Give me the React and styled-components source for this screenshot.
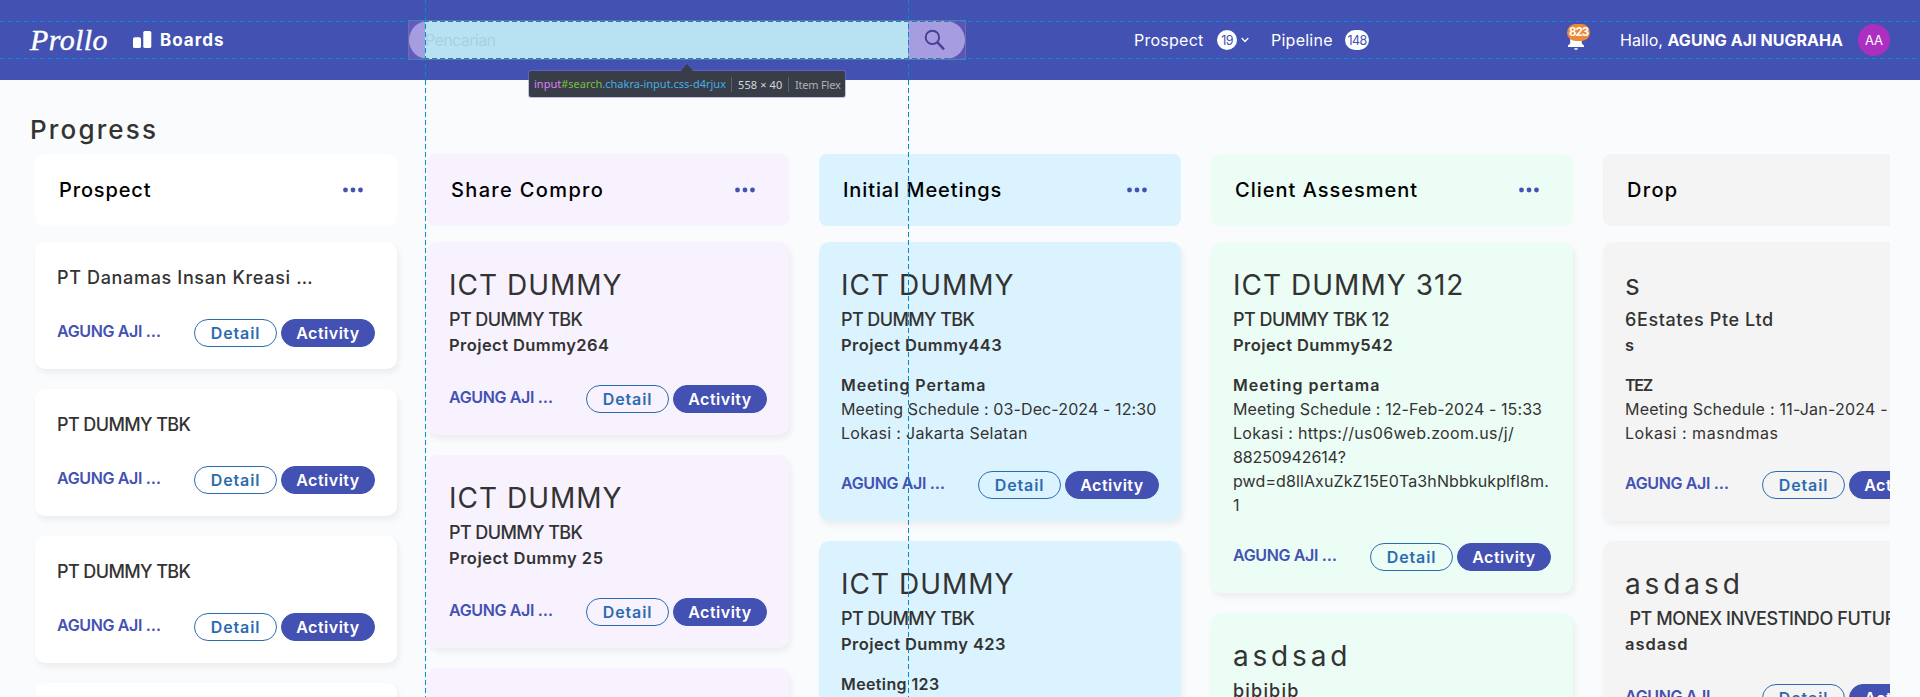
import React from "react";
import styled, { createGlobalStyle } from "styled-components";

const GlobalStyle = createGlobalStyle`
  * { box-sizing: border-box; }
  body {
    margin: 0;
    overflow: hidden;
    background: #fafbfd;
    color: #333;
    font-family: Inter, "Open Sans", sans-serif;
    white-space: nowrap;
    font-kerning: normal;
  }
`;

const INDIGO = "#4351b2";

const Page = styled.div`
  position: relative;
  height: 697px;
  overflow: hidden;
`;

/* ---------- top bar ---------- */

const TopBar = styled.header`
  display: flex;
  align-items: center;
  height: 80px;
  padding: 0 30px;
  background: ${INDIGO};
  color: #fff;
`;

const Logo = styled.div`
  width: 103px;
  font: italic 400 30px/34px "Liberation Serif", serif;
  letter-spacing: 0.4px;
  -webkit-text-stroke: 0.4px #fff;
`;

const BoardsLink = styled.div`
  display: flex;
  align-items: center;
  width: 275px;
`;

const BoardsLabel = styled.span`
  margin-left: 8px;
  font-size: 17px;
  font-weight: 700;
  letter-spacing: 1px;
`;

const Search = styled.div`
  display: flex;
  align-items: center;
  width: 558px;
  height: 40px;
  border: 1px solid #6f7196;
  background: linear-gradient(90deg, #6259c6, #5b52bf);
`;

const SearchPill = styled.div`
  display: flex;
  width: 100%;
  height: 38px;
  padding-left: 16px;
  border-radius: 19px;
  background: #a69ce0;
`;

const SearchField = styled.div`
  width: 483px;
  line-height: 38px;
  background: #b8e2f2;
  color: #a4d2e5;
  font-size: 16px;
  letter-spacing: -0.6px;
`;

const SearchButton = styled.div`
  display: flex;
  flex: 1;
  align-items: center;
  padding-left: 16px;
  color: #4a3f96;
`;

const NavLinks = styled.nav`
  display: flex;
  align-items: center;
  width: 432px;
  padding-left: 168px;
`;

const NavLabel = styled.span`
  width: ${(p) => p.$width}px;
  font-size: 16px;
  letter-spacing: 0.25px;
`;

const Count = styled.span`
  display: flex;
  justify-content: center;
  width: ${(p) => p.$width}px;
  height: 20px;
  border-radius: 10px;
  background: #fff;
  color: ${INDIGO};
  font-size: 12.5px;
  line-height: 21px;
  letter-spacing: -0.6px;
`;

const Chevron = styled.svg`
  margin: 0 22px 0 4px;
`;

const Bell = styled.div`
  position: relative;
  display: flex;
  width: 52px;
  margin-left: 169px;
`;

const BellCount = styled.span`
  position: absolute;
  left: 0;
  top: -5px;
  width: 23px;
  height: 17px;
  border-radius: 8.5px;
  background: #ed8936;
  font-size: 11.5px;
  font-weight: 700;
  line-height: 17px;
  letter-spacing: -1px;
  text-align: center;
`;

const Greeting = styled.div`
  width: 239px;
  padding-left: 1px;
  font-size: 16px;
  letter-spacing: 0.03px;
`;

const Avatar = styled.div`
  width: 32px;
  height: 32px;
  border-radius: 50%;
  background: #ad2fc2;
  font-size: 13px;
  line-height: 33px;
  text-align: center;
`;

/* ---------- board ---------- */

const Heading = styled.h1`
  margin: 30px 0 5px 30px;
  font-size: 26px;
  font-weight: 500;
  line-height: 39px;
  letter-spacing: 2.15px;
`;

const Board = styled.main`
  display: flex;
  gap: 30px;
  margin-right: 30px;
  padding-left: 35px;
  overflow: hidden;
`;

const Column = styled.section`
  display: flex;
  flex: 0 0 362px;
  flex-direction: column;
  gap: 20px;
  height: 543px;
`;

const ColumnHead = styled.div`
  display: flex;
  flex: none;
  align-items: center;
  justify-content: space-between;
  height: 72px;
  margin-bottom: -4px;
  padding: 0 34px 0 24px;
  border-radius: 8px;
  background: ${(p) => p.$tint};
  color: #000;
  font-size: 20px;
  font-weight: 500;
  letter-spacing: ${(p) => p.$track}px;
`;

const Card = styled.article`
  flex: none;
  padding: 22px;
  border-radius: 10px;
  background: ${(p) => p.$tint};
  box-shadow: 2px 4px 6px rgba(0, 0, 0, 0.06);
`;

const Title = styled.h2`
  margin: 0;
  font-size: 28px;
  font-weight: 400;
  line-height: 42px;
  letter-spacing: ${(p) => p.$track}px;
`;

const Company = styled.div`
  font-size: 18px;
  font-weight: 500;
  line-height: 27px;
  letter-spacing: ${(p) => p.$track}px;
  white-space: pre;
`;

const Project = styled.div`
  font-size: 16.5px;
  font-weight: 600;
  line-height: 24px;
  letter-spacing: ${(p) => p.$track}px;
`;

const Meeting = styled.div`
  margin: 16px 0 -2px;
`;

const MeetingName = styled.div`
  font-size: 16px;
  font-weight: 600;
  line-height: 24px;
  letter-spacing: ${(p) => p.$track}px;
`;

const MeetingLine = styled.div`
  font-size: 16px;
  line-height: 24px;
  letter-spacing: ${(p) => p.$track}px;
`;

const CardFoot = styled.div`
  display: flex;
  gap: 4px;
  margin-top: 28px;
`;

const Owner = styled.span`
  flex: 1;
  color: ${INDIGO};
  font-size: 16px;
  font-weight: 600;
  line-height: 24px;
  letter-spacing: -0.35px;
`;

const Button = styled.button`
  width: ${(p) => (p.$solid ? 94 : 83)}px;
  height: 28px;
  padding: 0;
  border: 1px solid ${(p) => (p.$solid ? INDIGO : "#2b6cb0")};
  border-radius: 14px;
  background: ${(p) => (p.$solid ? INDIGO : "transparent")};
  color: ${(p) => (p.$solid ? "#fff" : "#2b6cb0")};
  font: 600 16px/26px Inter, sans-serif;
  letter-spacing: ${(p) => (p.$solid ? 0.5 : 0.85)}px;
`;

/* ---------- element inspector overlay ---------- */

const GuideX = styled.div`
  position: absolute;
  left: 0;
  right: 0;
  top: ${(p) => p.$at}px;
  height: 1px;
  background: repeating-linear-gradient(90deg, #008ccf 0 5px, transparent 5px 8px);
`;

const GuideY = styled.div`
  position: absolute;
  top: 0;
  bottom: 0;
  left: ${(p) => p.$at}px;
  width: 1px;
  background: repeating-linear-gradient(180deg, #008ccf 0 5px, transparent 5px 8px);
`;

const Tooltip = styled.div`
  position: absolute;
  left: 529px;
  top: 71px;
  display: flex;
  align-items: center;
  width: 316px;
  height: 26px;
  padding-left: 5px;
  border-radius: 2px;
  background: #383d47;
  box-shadow: 0 0 0 1px rgba(120, 125, 200, 0.45);
  color: #d7d7db;
  font: 11px/26px "Noto Sans", sans-serif;
`;

const TooltipArrow = styled.i`
  position: absolute;
  left: 152px;
  top: -7px;
  border: solid transparent;
  border-width: 0 6px 7px;
  border-bottom-color: #383d47;
`;

const Selector = styled.span`
  width: 197px;
  color: #46aee6;
`;

const Tag = styled.span`
  color: #df80ff;
`;

const Id = styled.span`
  color: #76c043;
`;

const TooltipCell = styled.span`
  height: 15px;
  padding-left: 6px;
  width: 57px;
  border-left: 1px solid #5c616c;
  line-height: 15px;
  color: ${(p) => (p.$muted ? "#b1b1b3" : "#d7d7db")};
  letter-spacing: ${(p) => (p.$muted ? -0.2 : 0.1)}px;
`;

/* ---------- icons ---------- */

const BarsIcon = () => (
  <svg width="19" height="18" viewBox="0 0 19 18" fill="#fff">
    <rect x="0" y="6.3" width="8" height="10.7" rx="1.6" />
    <rect x="10.3" y="0" width="8" height="17" rx="1.6" />
  </svg>
);

const SearchIcon = () => (
  <svg width="22" height="22" viewBox="0 0 22 22" fill="none" stroke="currentColor" strokeWidth="2">
    <circle cx="8.4" cy="8.4" r="6.7" />
    <path d="M13.2 13.2 20 20.3" strokeWidth="2.4" />
  </svg>
);

const BellIcon = () => (
  <svg width="18" height="22" viewBox="0 0 18 22" fill="#fff">
    <path d="M9 1C5 1 3.2 4 3.2 7.500V14.500L1 16.500V18H17V16.500L14.800 14.500V7.500C14.800 4 13 1 9 1Z" />
    <path d="M7 19.300H11Q10.600 21 9 21T7 19.300Z" />
  </svg>
);

const DotsIcon = () => (
  <svg width="20" height="6" viewBox="0 0 20 6" fill={INDIGO}>
    <circle cx="2.5" cy="3" r="2.4" />
    <circle cx="10" cy="3" r="2.4" />
    <circle cx="17.500" cy="3" r="2.4" />
  </svg>
);

/* ---------- data: each text is [content, letter spacing] ---------- */

const DUMMY = ["ICT DUMMY", 1];
const DUMMY_PT = ["PT DUMMY TBK", -0.6];

const columns = [
  {
    name: ["Prospect", 0.85],
    tint: "#fff",
    cards: [
      { company: ["PT Danamas Insan Kreasi …", 0.66] },
      { company: DUMMY_PT },
      { company: DUMMY_PT },
      { company: DUMMY_PT },
    ],
  },
  {
    name: ["Share Compro", 1.35],
    tint: "#f7f2fe",
    cards: [
      { title: DUMMY, company: DUMMY_PT, project: ["Project Dummy264", 0.43] },
      { title: DUMMY, company: DUMMY_PT, project: ["Project Dummy 25", 0.5] },
      { title: DUMMY, company: DUMMY_PT, project: ["Project Dummy 25", 0.5] },
    ],
  },
  {
    name: ["Initial Meetings", 0.9],
    tint: "#dbf3ff",
    cards: [
      {
        title: DUMMY,
        company: DUMMY_PT,
        project: ["Project Dummy443", 0.43],
        meeting: ["Meeting Pertama", 0.87],
        lines: [
          ["Meeting Schedule : 03-Dec-2024 - 12:30", 0.11],
          ["Lokasi : Jakarta Selatan", 0.3],
        ],
      },
      {
        title: DUMMY,
        company: DUMMY_PT,
        project: ["Project Dummy 423", 0.43],
        meeting: ["Meeting 123", 0.38],
        lines: [],
      },
    ],
  },
  {
    name: ["Client Assesment", 1],
    tint: "#ebfdf5",
    cards: [
      {
        title: ["ICT DUMMY 312", 1.02],
        company: ["PT DUMMY TBK 12", -0.53],
        project: ["Project Dummy542", 0.43],
        meeting: ["Meeting pertama", 1.03],
        lines: [
          ["Meeting Schedule : 12-Feb-2024 - 15:33", 0.1],
          ["Lokasi : https://us06web.zoom.us/j/", 0.3],
          ["88250942614?", -0.12],
          ["pwd=d8llAxuZkZ15E0Ta3hNbbkukplfl8m.", 0.1],
          ["1", 0],
        ],
      },
      { title: ["asdsad", 3.8], company: ["bibibib", 1.2] },
    ],
  },
  {
    name: ["Drop", 1.3],
    tint: "#f4f4f4",
    cards: [
      {
        title: ["s", 0],
        company: ["6Estates Pte Ltd", 0.6],
        project: ["s", 0],
        meeting: ["TEZ", -1.3],
        lines: [
          ["Meeting Schedule : 11-Jan-2024 - 10:00", 0.22],
          ["Lokasi : masndmas", 0.53],
        ],
      },
      {
        title: ["asdasd", 3.9],
        company: [" PT MONEX INVESTINDO FUTURES", -0.4],
        project: ["asdasd", 1],
      },
    ],
  },
];

const BoardCard = ({ card, tint }) => (
  <Card $tint={tint}>
    {card.title && <Title $track={card.title[1]}>{card.title[0]}</Title>}
    <Company $track={card.company[1]}>{card.company[0]}</Company>
    {card.project && <Project $track={card.project[1]}>{card.project[0]}</Project>}
    {card.meeting && (
      <Meeting>
        <MeetingName $track={card.meeting[1]}>{card.meeting[0]}</MeetingName>
        {card.lines.map(([text, track]) => (
          <MeetingLine key={text} $track={track}>{text}</MeetingLine>
        ))}
      </Meeting>
    )}
    <CardFoot>
      <Owner>AGUNG AJI …</Owner>
      <Button>Detail</Button>
      <Button $solid>Activity</Button>
    </CardFoot>
  </Card>
);

export default function App() {
  return (
    <Page>
      <GlobalStyle />
      <TopBar>
        <Logo>Prollo</Logo>
        <BoardsLink>
          <BarsIcon />
          <BoardsLabel>Boards</BoardsLabel>
        </BoardsLink>
        <Search>
          <SearchPill>
            <SearchField>Pencarian</SearchField>
            <SearchButton>
              <SearchIcon />
            </SearchButton>
          </SearchPill>
        </Search>
        <NavLinks>
          <NavLabel $width={83}>Prospect</NavLabel>
          <Count $width={20}>19</Count>
          <Chevron width="8" height="6" viewBox="0 0 8 6" fill="none" stroke="#fff" strokeWidth="1.300">
            <path d="M0.700 1 4 4.500 7.300 1" />
          </Chevron>
          <NavLabel $width={74}>Pipeline</NavLabel>
          <Count $width={24}>148</Count>
        </NavLinks>
        <Bell>
          <BellIcon />
          <BellCount>823</BellCount>
        </Bell>
        <Greeting>
          Hallo, <b>AGUNG AJI NUGRAHA</b>
        </Greeting>
        <Avatar>AA</Avatar>
      </TopBar>

      <Heading>Progress</Heading>
      <Board>
        {columns.map(({ name, tint, cards }) => (
          <Column key={name[0]}>
            <ColumnHead $tint={tint} $track={name[1]}>
              {name[0]}
              <DotsIcon />
            </ColumnHead>
            {cards.map((card, i) => (
              <BoardCard key={i} card={card} tint={tint} />
            ))}
          </Column>
        ))}
      </Board>

      <GuideX $at={21} />
      <GuideX $at={58} />
      <GuideY $at={425} />
      <GuideY $at={908} />
      <Tooltip>
        <TooltipArrow />
        <Selector>
          <Tag>input</Tag>
          <Id>#search</Id>.chakra-input.css-d4rjux
        </Selector>
        <TooltipCell>558 × 40</TooltipCell>
        <TooltipCell $muted>Item Flex</TooltipCell>
      </Tooltip>
    </Page>
  );
}
